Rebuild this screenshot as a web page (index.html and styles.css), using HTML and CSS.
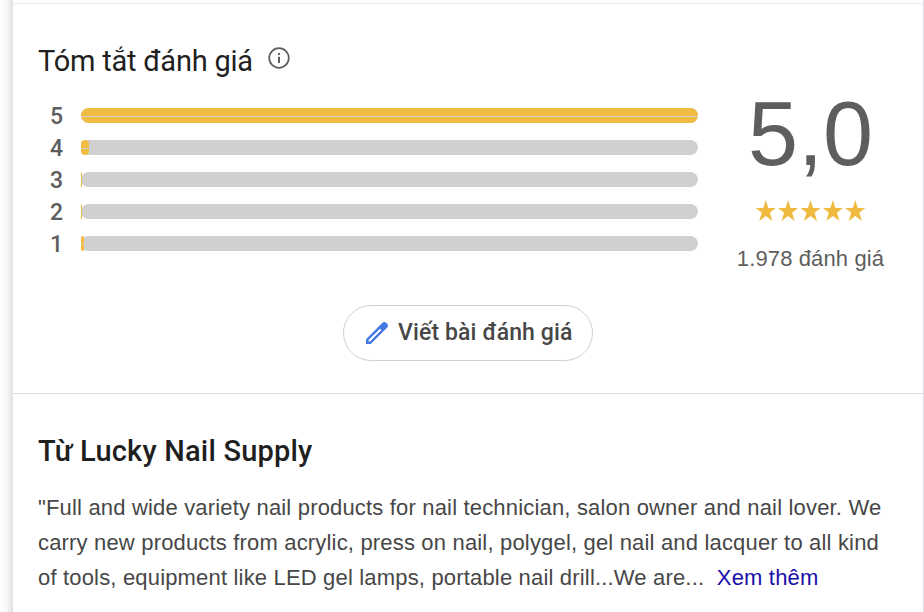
FILE: index.html
```
<!DOCTYPE html>
<html lang="vi">
<head>
  <meta charset="UTF-8">
  <title>Lucky Nail Supply</title>
  <link rel="stylesheet" href="styles.css">
</head>
<body>
  <div class="gutter"></div>
  <main class="panel">
    <section class="reviews">
      <div class="heading">
        <h2>Tóm tắt đánh giá</h2>
        <svg class="info" viewBox="0 0 22 22">
          <circle cx="11" cy="11" r="9.8" fill="none" stroke="#5e5e5e" stroke-width="1.7"/>
          <path d="M10 9.7h2v6.3h-2zM10 6h2v2h-2z" fill="#5e5e5e"/>
        </svg>
      </div>
      <div class="summary">
        <div class="bars">
          <div class="row"><span class="num">5</span><div class="track"><div class="fill" style="width:617px"></div></div></div>
          <div class="row"><span class="num">4</span><div class="track"><div class="fill" style="width:8px"></div></div></div>
          <div class="row"><span class="num">3</span><div class="track"><div class="fill" style="width:1px"></div></div></div>
          <div class="row"><span class="num">2</span><div class="track"><div class="fill" style="width:1px"></div></div></div>
          <div class="row"><span class="num">1</span><div class="track"><div class="fill" style="width:3px"></div></div></div>
        </div>
        <div class="score">
          <div class="value">5,0</div>
          <svg class="stars" viewBox="0 0 112 24">
            <defs><path id="star" d="M10 0l2.5 8.1h7.5l-6 4.7 2.6 8.2-6.6-4.9-6.6 4.9 2.6-8.2-6-4.7h7.5z"/></defs>
            <g fill="#f0b940">
              <use href="#star" x="0.8" y="1"/>
              <use href="#star" x="23.1" y="1"/>
              <use href="#star" x="45.5" y="1"/>
              <use href="#star" x="67.9" y="1"/>
              <use href="#star" x="90.3" y="1"/>
            </g>
          </svg>
          <div class="count">1.978 đánh giá</div>
        </div>
      </div>
      <button class="write" type="button">
        <svg class="pencil" viewBox="0 0 24 24">
          <path fill="#4678e3" fill-rule="evenodd" d="M1 18.2V23h4.8L22 6.8c1.3-1.3 1.3-3 0-4.2l-.6-.6c-1.2-1.3-2.9-1.3-4.2 0zM3.6 20.4v-1.3L15 7.7l1.4 1.4L5 20.4z"/>
        </svg>
        <span class="label">Viết bài đánh giá</span>
      </button>
    </section>
    <section class="about">
      <h2>Từ Lucky Nail Supply</h2>
      <p>"Full and wide variety nail products for nail technician, salon owner and nail lover. We<br>
      carry new products from acrylic, press on nail, polygel, gel nail and lacquer to all kind<br>
      of tools, equipment like LED gel lamps, portable nail drill...We are...&nbsp; <a href="#">Xem thêm</a></p>
    </section>
  </main>
</body>
</html>
```
FILE: styles.css
```
* {
  box-sizing: border-box;
}

body {
  margin: 0;
  display: flex;
  height: 612px;
  overflow: hidden;
  background: #fff;
  font-family: "Liberation Sans", Arial, sans-serif;
  color: #474747;
}

.gutter {
  width: 13px;
  background: linear-gradient(to right, #fff 0, #f8f8f8 50%, #e0e0e0 100%);
}

.panel {
  width: 911px;
  border-right: 1px solid #dadce0;
}

.reviews {
  height: 391px;
  margin-top: 3px;
  border-top: 1px solid #e8e8e8;
  border-bottom: 1px solid #dadce0;
}

h2 {
  margin: 0;
  font-family: Roboto, sans-serif;
  font-weight: 400;
  color: #1f1f1f;
  white-space: nowrap;
}

.heading {
  display: flex;
  align-items: flex-start;
  gap: 15px;
  padding: 39px 0 0 25px;
}

.heading h2 {
  width: 215px;
  font-size: 29px;
  line-height: 36px;
  letter-spacing: -0.22px;
}

.info {
  width: 22px;
  height: 22px;
  margin-top: 4px;
}

.summary {
  display: flex;
  height: 193px;
}

.bars {
  width: 685px;
  padding: 21px 0 0 37px;
}

.row {
  display: flex;
  align-items: center;
  height: 32px;
}

.num {
  width: 31px;
  font-family: Roboto, sans-serif;
  font-size: 23px;
  font-weight: 500;
  color: #5e5e5e;
}

.track {
  width: 617px;
  height: 15px;
  margin-bottom: 1px;
  border-radius: 8px;
  background: #d0d0d0;
}

.fill {
  height: 15px;
  border-radius: 8px;
  background: linear-gradient(#f1bc42 8px, #d0d0d0 8px, #d0d0d0 9px, #f1bc42 9px);
}

.score {
  display: flex;
  flex-direction: column;
  align-items: center;
  width: 226px;
  padding-top: 3px;
  color: #5e5e5e;
}

.value {
  font-size: 90px;
  line-height: 104px;
}

.stars {
  width: 112px;
  height: 24px;
  margin-top: 13px;
}

.count {
  margin-top: 23px;
  font-size: 22px;
  line-height: 26px;
  letter-spacing: 0.12px;
}

.write {
  display: flex;
  align-items: center;
  gap: 9px;
  width: 250px;
  height: 56px;
  margin: 33px 0 0 330px;
  padding: 0 0 0 21px;
  border: 1px solid #d0d0d0;
  border-radius: 28px;
  background: #fff;
  color: #474747;
}

.pencil {
  width: 24px;
  height: 24px;
}

.label {
  margin-bottom: 2px;
  font-family: Roboto, sans-serif;
  font-size: 23px;
  font-weight: 500;
  letter-spacing: 0.12px;
  white-space: nowrap;
}

.about {
  padding: 39px 0 0 25px;
}

.about h2 {
  font-size: 29px;
  font-weight: 500;
  line-height: 36px;
  letter-spacing: 0.2px;
}

.about p {
  margin: 21px 0 0;
  font-size: 22px;
  line-height: 35px;
  letter-spacing: 0.175px;
  white-space: nowrap;
}

.about a {
  color: #1a0dab;
  text-decoration: none;
}
```
